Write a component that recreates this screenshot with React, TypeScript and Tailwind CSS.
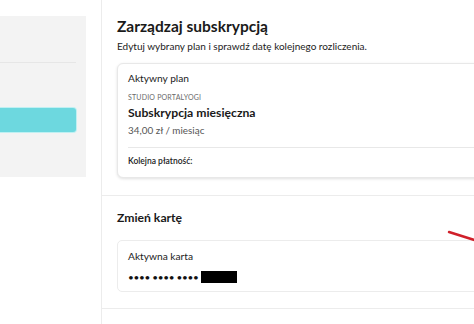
import React from "react";

export default function App() {
  return (
    <div
      className="relative flex w-[474px] h-[324px] overflow-hidden bg-white text-[#1e1e1e]"
      style={{ fontFamily: "Lato, 'Open Sans', sans-serif" }}
    >
      {/* left column */}
      <div className="w-[101px] shrink-0">
        <div className="mt-[16px] w-[86px] h-[161px] bg-[#f3f3f3] pr-[10px] flex flex-col">
          <div className="h-[46px]" />
          <div className="h-px bg-[#e6e6e6]" />
          <div className="h-[45px]" />
          <div className="h-[24px] rounded-r-[3px] bg-[#6dd8df] shadow-[0_0_0_1px_#bff0f2]" />
        </div>
      </div>

      {/* main column */}
      <div className="w-[420px] shrink-0 border-l border-[#ececec]">
        <div className="border-b border-[#ececec] pl-[15px] pt-[15px] pb-[17px]">
          <h1 className="text-[15.5px] leading-[22px] font-bold text-[#1a1a1a]">
            Zarządzaj subskrypcją
          </h1>
          <p className="text-[10px] leading-[14px] text-[#222] mt-[2px]">
            Edytuj wybrany plan i sprawdź datę kolejnego rozliczenia.
          </p>
          <div className="mt-[10px] w-[400px] h-[115px] rounded-[6px] border border-[#e8e8e8] bg-white shadow-[0_1px_3px_rgba(0,0,0,0.12)] pl-[10px] pt-[7px]">
            <div className="text-[10.2px] leading-[14px] text-[#222]">Aktywny plan</div>
            <div className="mt-[8px] text-[7px] leading-[9px] uppercase tracking-[0.2px] text-[#6a6a6a]">
              Studio Portalyogi
            </div>
            <div className="mt-[3px] text-[12.2px] leading-[16px] font-bold text-[#1a1a1a]">
              Subskrypcja miesięczna
            </div>
            <div className="mt-[2px] text-[9.9px] leading-[14px] text-[#555]">
              34,00 zł / miesiąc
            </div>
            <div className="mt-[10px] h-px bg-[#e8e8e8]" />
            <div className="mt-[8px] text-[8.5px] leading-[11px] font-semibold text-[#222]">
              Kolejna płatność:
            </div>
          </div>
        </div>

        <div className="border-b border-[#ececec] pl-[15px] pt-[13px] pb-[16px]">
          <h2 className="text-[12.2px] leading-[17px] font-bold text-[#1a1a1a]">Zmień kartę</h2>
          <div className="mt-[14px] w-[400px] h-[52px] rounded-[5px] border border-[#ececec] bg-white pl-[10px] pt-[8px]">
            <div className="text-[10.2px] leading-[14px] text-[#222]">Aktywna karta</div>
            <div className="mt-[8px] flex items-center">
              <span className="text-[10px] leading-[12px] tracking-[-0.3px] text-[#111]">
                •••• •••• ••••
              </span>
              <span className="ml-[2px] inline-block w-[36px] h-[12px] bg-black" />
            </div>
          </div>
        </div>
      </div>

      {/* red arrow line overlay */}
      <svg className="absolute left-[446px] top-[228px]" width="30" height="16" viewBox="0 0 30 16">
        <line x1="3" y1="4" x2="30" y2="12.5" stroke="#d0202a" strokeWidth="2.4" strokeLinecap="round" />
      </svg>
    </div>
  );
}
